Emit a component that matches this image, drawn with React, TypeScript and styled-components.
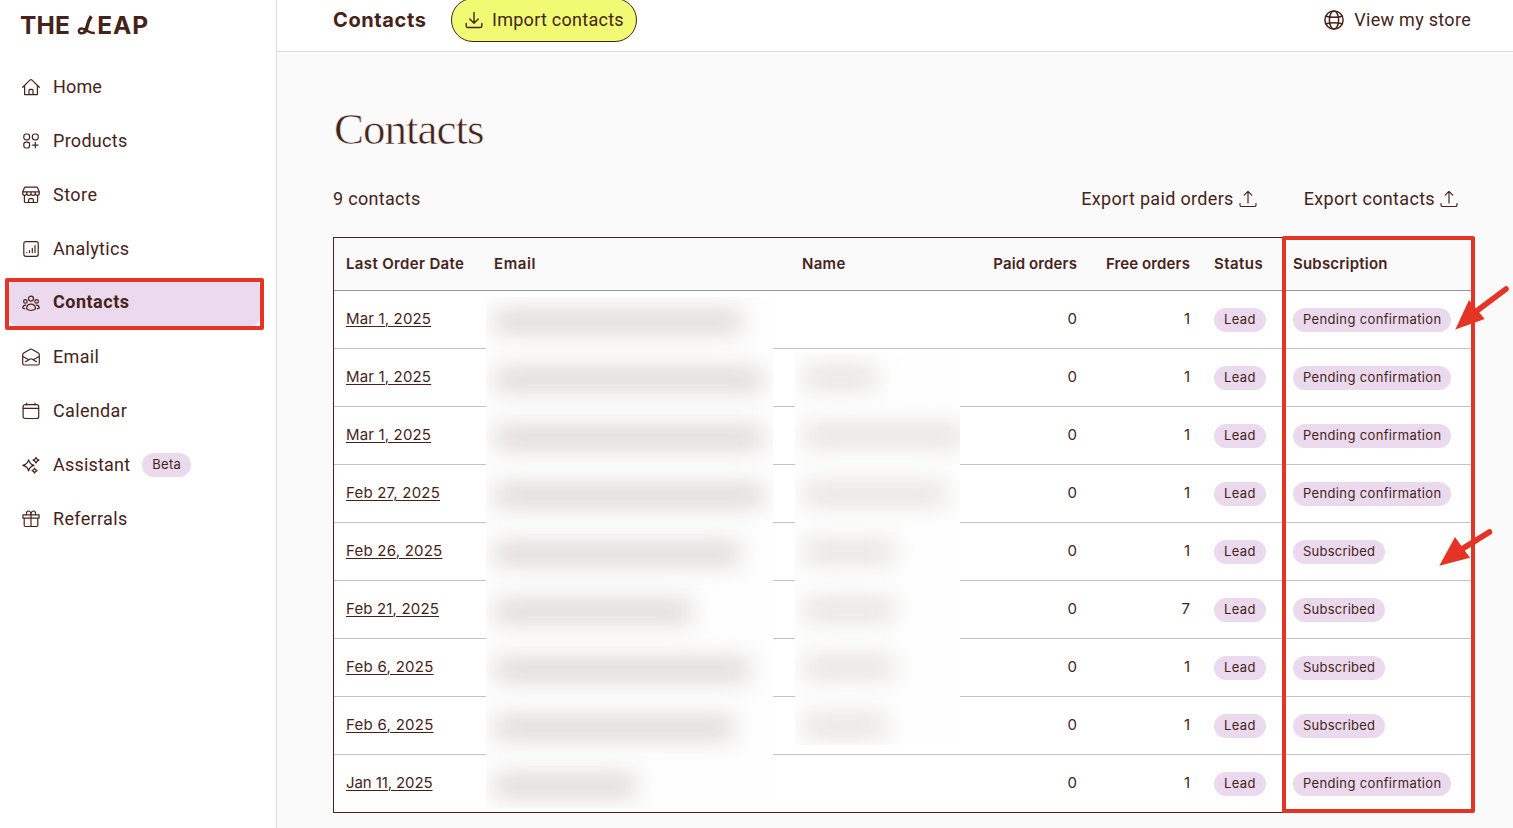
import React from "react";
import styled, { createGlobalStyle } from "styled-components";

const brown = "#46231a";
const lilac = "#ebdaed";
const red = "#e43425";

const GlobalStyle = createGlobalStyle`
  * { box-sizing: border-box; }
  body { margin: 0; background: #fafafa; color: ${brown}; overflow: hidden; }
`;

const Page = styled.div`
  position: relative;
  display: flex;
  width: 100%;
  height: 828px;
  overflow: hidden;
  font-family: Roboto, "Liberation Sans", sans-serif;
  font-size: 18px;
`;

const Sidebar = styled.aside`
  width: 277px;
  flex: none;
  background: #fff;
  border-right: 1px solid #d9d9d9;
`;

const Logo = styled.div`
  display: flex;
  align-items: center;
  height: 50px;
  padding-left: 20px;
  font-family: Inter, sans-serif;
  font-weight: 750;
  font-size: 24.5px;
  line-height: 24px;
`;
const LogoWord = styled.span<{ $ls?: number }>`
  letter-spacing: ${(p) => p.$ls ?? 0}px;
`;
const LogoL = styled.svg`
  width: 19px;
  height: 20px;
  margin: 0 1px 0 7px;
`;

const Nav = styled.nav`
  display: flex;
  flex-direction: column;
  gap: 8px;
  padding: 14px 16px 0 9px;
`;

const NavItem = styled.a<{ $active?: boolean }>`
  display: flex;
  align-items: center;
  height: 46px;
  padding-left: 13px;
  gap: 13px;
  border-radius: 8px;
  background: ${(p) => (p.$active ? lilac : "transparent")};
  font-weight: ${(p) => (p.$active ? 700 : 400)};
`;

const Label = styled.span<{ $ls?: number; $up?: number }>`
  letter-spacing: ${(p) => p.$ls ?? 0}px;
  padding-bottom: ${(p) => p.$up ?? 0}px;
  white-space: nowrap;
`;

const Icon = styled.svg<{ $size?: number; $sw?: number }>`
  width: ${(p) => p.$size ?? 18}px;
  height: ${(p) => p.$size ?? 18}px;
  flex: none;
  fill: none;
  stroke: ${brown};
  stroke-width: ${(p) => p.$sw ?? 1.2};
  stroke-linecap: round;
  stroke-linejoin: round;
`;

const Pill = styled.span<{ $ls?: number }>`
  display: inline-flex;
  align-items: center;
  height: 24px;
  padding: 0 10px 2px;
  border-radius: 12px;
  background: ${lilac};
  font-family: Inter, sans-serif;
  font-size: 13px;
  font-weight: 400;
  letter-spacing: ${(p) => p.$ls ?? 0.35}px;
  white-space: nowrap;
`;
const NavBadge = styled(Pill)`
  margin-left: -1px;
`;

const Main = styled.main`
  flex: 1;
  min-width: 0;
`;

const TopBar = styled.header`
  display: flex;
  align-items: center;
  height: 52px;
  padding: 0 42px 12px 56px;
  background: #fff;
  border-bottom: 1px solid #d9d9d9;
`;
const TopTitle = styled.span`
  width: 118px;
  font-family: Inter, sans-serif;
  font-size: 20px;
  font-weight: 700;
  letter-spacing: 0.6px;
`;
const ImportButton = styled.button`
  display: flex;
  align-items: center;
  flex: none;
  gap: 9px;
  width: 186px;
  height: 44px;
  padding: 0 0 0 13px;
  border: 1px solid ${brown};
  border-radius: 22px;
  background: #f0fb73;
  color: ${brown};
  font: inherit;
`;
const StoreLink = styled.a`
  display: flex;
  align-items: center;
  gap: 10px;
  margin-left: auto;
`;

const Content = styled.section`
  padding: 53px 41px 0 56px;
`;
const Heading = styled.h1`
  margin: 0 0 0 1px;
  height: 48px;
  font-family: "Liberation Serif", serif;
  font-size: 45px;
  font-weight: 400;
  line-height: 48px;
  letter-spacing: -1px;
  -webkit-text-stroke: 0.6px #fafafa;
`;
const Summary = styled.div`
  display: flex;
  align-items: center;
  height: 30px;
  margin: 31px 14px 23px 0;
`;
const ExportLink = styled.a<{ $first?: boolean }>`
  display: flex;
  align-items: center;
  gap: 5px;
  margin-left: ${(p) => (p.$first ? "auto" : "47px")};
`;

const Table = styled.div`
  border: 1px solid ${brown};
  font-family: Inter, sans-serif;
  font-size: 15px;
`;
const Row = styled.div<{ $head?: boolean }>`
  display: grid;
  grid-template-columns: 148px 308px 180px 119px 113px 79px 1fr;
  align-items: center;
  height: ${(p) => (p.$head ? 53 : 58)}px;
  background: ${(p) => (p.$head ? "#fafafa" : "#fff")};
  border-bottom: 1px solid ${(p) => (p.$head ? "#999" : "#c4c4c4")};
  font-weight: ${(p) => (p.$head ? 600 : 400)};
  &:last-child { border-bottom: 0; height: 57px; }
`;
const Cell = styled.div<{ $right?: boolean; $pill?: boolean; $ls?: number }>`
  padding: ${(p) => (p.$pill ? "1px 12px 0" : "0 12px 2px")};
  text-align: ${(p) => (p.$right ? "right" : "left")};
  letter-spacing: ${(p) => p.$ls ?? 0}px;
  white-space: nowrap;
`;
const DateLink = styled.a<{ $ls?: number }>`
  text-decoration: underline;
  text-decoration-thickness: 1px;
  text-underline-offset: 2px;
  letter-spacing: ${(p) => p.$ls ?? 0}px;
`;

const Redaction = styled.div<{ $x: number; $y: number; $w: number; $h: number }>`
  position: absolute;
  left: ${(p) => p.$x}px;
  top: ${(p) => p.$y}px;
  width: ${(p) => p.$w}px;
  height: ${(p) => p.$h}px;
  padding: 15px 0 0 9px;
  display: flex;
  flex-direction: column;
  gap: 39px;
  overflow: hidden;
  background: #fefefe;
`;
const Smudge = styled.div<{ $w: number; $tone: string }>`
  flex: none;
  width: ${(p) => p.$w}px;
  height: 19px;
  background: ${(p) => p.$tone};
  filter: blur(12px);
`;

const Frame = styled.div<{ $x: number; $y: number; $w: number; $h: number }>`
  position: absolute;
  left: ${(p) => p.$x}px;
  top: ${(p) => p.$y}px;
  width: ${(p) => p.$w}px;
  height: ${(p) => p.$h}px;
  border: 4px solid ${red};
  border-radius: 2px;
`;
const Arrow = styled.svg<{ $x: number; $y: number }>`
  position: absolute;
  left: ${(p) => p.$x}px;
  top: ${(p) => p.$y}px;
  width: 60px;
  height: 50px;
`;

const paths: Record<string, React.ReactNode> = {
  Home: <path d="M.7 9.3 8.2 1.9q.8-.7 1.6 0l7.5 7.4M2.6 7.6v9h12.8v-9M7 16.6v-4.2q0-1 1-1h2q1 0 1 1v4.2" />,
  Products: (
    <>
      <rect x="1.8" y="2" width="5.8" height="5.8" rx="2.2" />
      <rect x="10.4" y="2" width="5.8" height="5.8" rx="2.2" />
      <rect x="1.8" y="10.2" width="5.8" height="5.8" rx="2.2" />
      <path d="M13.3 10.4v5.4M10.6 13.1H16" />
    </>
  ),
  Store: (
    <path d="M3.6 1.2h10.8q.9 0 1.3.8l1.6 3.8H.7L2.3 2q.4-.8 1.3-.8zM.7 5.8v1.4a2 2 0 0 0 4.1 0V5.8M4.8 7.2a2 2 0 0 0 4.2 0V5.8M9 7.2a2 2 0 0 0 4.2 0V5.8M13.2 7.2a2 2 0 0 0 4.1 0V5.8M2.4 9.4v5.8q0 1.3 1.3 1.3h10.6q1.3 0 1.3-1.3V9.4M6.6 16.5V14q0-1.4 1.4-1.4h2q1.4 0 1.4 1.4v2.5" />
  ),
  Analytics: (
    <>
      <rect x="1.8" y="1.7" width="14.4" height="14.6" rx="2" />
      <path d="M4.8 12.4v.2M7.5 10.6v2M10.3 8.4v4.2M13 5.6v7" />
    </>
  ),
  Contacts: (
    <>
      <circle cx="9" cy="4.6" r="2.5" />
      <circle cx="3.4" cy="7.4" r="1.8" />
      <circle cx="14.6" cy="7.4" r="1.8" />
      <path d="M4.4 14.8q.6-4.6 4.6-4.6t4.6 4.6Q11.4 16.5 9 16.5T4.4 14.8zM3.8 11.2Q1.3 11 .7 13.9q.8.6 1.9.7M14.2 11.2q2.5-.2 3.1 2.7-.8.6-1.9.7" />
    </>
  ),
  Email: (
    <path d="M.7 6.8Q.7 5.6 1.7 5L8.2 1.3q.8-.5 1.6 0L16.3 5q1 .6 1 1.8v8.4q0 1.8-1.8 1.8h-13Q.7 17 .7 15.200zM.9 8.4l5.8 3.3M17.1 8.4l-5.8 3.3M3.5 13.8 8.2 11q.8-.5 1.6 0l4.7 2.8" />
  ),
  Calendar: (
    <>
      <rect x="1.1" y="2.7" width="15.6" height="13.8" rx="2" />
      <path d="M1.1 6.3h15.6M4.8 1.2v1.5M13 1.2v1.5" />
    </>
  ),
  Assistant: (
    <path d="M6.6 3.9Q7.6 8.3 12 9.4 7.6 10.5 6.6 14.8 5.6 10.5.8 9.4 5.6 8.3 6.6 3.9zM14 1.3q.6 2.1 2.9 2.8-2.3.7-2.9 2.9-.6-2.2-2.9-2.9 2.3-.7 2.9-2.8zM12.6 12.2q.5 1.8 2.5 2.4-2 .6-2.5 2.5-.5-1.9-2.5-2.5 2-.6 2.5-2.4z" />
  ),
  Referrals: (
    <path d="M.9 4.8h16.2v3.3H.9zM2.2 8.1v7.2q0 1.2 1.2 1.2h11.2q1.2 0 1.2-1.2V8.1M9 4.8v11.7M9 4.8Q8.7 1 6.4 1T4.5 4.8M9 4.8Q9.3 1 11.6 1t1.9 3.8" />
  ),
};

const nav: { name: string; ls: number; badge?: string }[] = [
  { name: "Home", ls: 0.15 },
  { name: "Products", ls: 0.28 },
  { name: "Store", ls: 0.45 },
  { name: "Analytics", ls: 0.35 },
  { name: "Contacts", ls: 0.5 },
  { name: "Email", ls: 0.35 },
  { name: "Calendar", ls: 0.35 },
  { name: "Assistant", ls: 0.2, badge: "Beta" },
  { name: "Referrals", ls: 0.33 },
];

const columns: { title: string; ls: number; right?: boolean }[] = [
  { title: "Last Order Date", ls: 0.35 },
  { title: "Email", ls: 0.6 },
  { title: "Name", ls: 0.3 },
  { title: "Paid orders", ls: 0.12, right: true },
  { title: "Free orders", ls: 0.12, right: true },
  { title: "Status", ls: 0.45 },
  { title: "Subscription", ls: 0.2 },
];

const rows: { date: string; ls: number; free: string; sub: string }[] = [
  { date: "Mar 1, 2025", ls: 0.16, free: "1", sub: "Pending confirmation" },
  { date: "Mar 1, 2025", ls: 0.16, free: "1", sub: "Pending confirmation" },
  { date: "Mar 1, 2025", ls: 0.16, free: "1", sub: "Pending confirmation" },
  { date: "Feb 27, 2025", ls: 0.2, free: "1", sub: "Pending confirmation" },
  { date: "Feb 26, 2025", ls: 0.22, free: "1", sub: "Subscribed" },
  { date: "Feb 21, 2025", ls: 0.16, free: "7", sub: "Subscribed" },
  { date: "Feb 6, 2025", ls: 0.27, free: "1", sub: "Subscribed" },
  { date: "Feb 6, 2025", ls: 0.27, free: "1", sub: "Subscribed" },
  { date: "Jan 11, 2025", ls: -0.1, free: "1", sub: "Pending confirmation" },
];

const emailWidths = [246, 267, 268, 268, 244, 196, 254, 238, 140];
const nameWidths = [72, 160, 142, 90, 90, 90, 82];

export default function App() {
  return (
    <>
      <GlobalStyle />
      <Page>
        <Sidebar>
          <Logo>
            <LogoWord $ls={0.2}>THE</LogoWord>
            <LogoL viewBox="0 0 19 20" fill="none" stroke={brown}>
              <path d="M14.3 1.2Q11.3 5.700 10.300 10.700 9.300 15.700 7 17.500" strokeWidth="3.4" />
              <path d="M8.500 16.2Q6.500 18.800 3.800 18.200 1.400 17.400 2 15.200 3 12.900 6.500 13.900 9 15 11.500 16.500 14 18.100 17.800 17.900" strokeWidth="2.5" />
            </LogoL>
            <LogoWord $ls={1}>EAP</LogoWord>
          </Logo>
          <Nav>
            {nav.map((n) => (
              <NavItem key={n.name} $active={n.name === "Contacts"}>
                <Icon viewBox="0 0 18 18">{paths[n.name]}</Icon>
                <Label $ls={n.ls} $up={n.name === "Contacts" ? 4 : 2}>{n.name}</Label>
                {n.badge && <NavBadge $ls={0.3}>{n.badge}</NavBadge>}
              </NavItem>
            ))}
          </Nav>
        </Sidebar>
        <Main>
          <TopBar>
            <TopTitle>Contacts</TopTitle>
            <ImportButton>
              <Icon $size={18} $sw={1.4} viewBox="0 0 18 18">
                <path d="M9 1.5v10.5M4.8 8l4.2 4.2L13.2 8M1.2 12.5v2.4q0 1.6 1.6 1.6h12.4q1.6 0 1.6-1.6v-2.4" />
              </Icon>
              <Label $ls={0.27}>Import contacts</Label>
            </ImportButton>
            <StoreLink>
              <Icon $size={20} $sw={1.5} viewBox="0 0 20 20">
                <circle cx="10" cy="10" r="9.1" />
                <ellipse cx="10" cy="10" rx="4.6" ry="9.1" />
                <path d="M1.8 6.2q8.2 2.3 16.4 0M1.8 13.8q8.2-2.3 16.4 0" />
              </Icon>
              <Label $ls={0.3}>View my store</Label>
            </StoreLink>
          </TopBar>
          <Content>
            <Heading>Contacts</Heading>
            <Summary>
              <Label $ls={0.3} $up={2}>9 contacts</Label>
              {["Export paid orders", "Export contacts"].map((t, i) => (
                <ExportLink key={t} $first={i === 0}>
                  <Label $ls={0.33} $up={2}>{t}</Label>
                  <Icon viewBox="0 0 18 18">
                    <path d="M9 13V1.5M5.2 5.2 9 1.4l3.8 3.8M1 13.5v1.4q0 1.6 1.6 1.6h12.8q1.6 0 1.6-1.6v-1.4" />
                  </Icon>
                </ExportLink>
              ))}
            </Summary>
            <Table role="table">
              <Row $head>
                {columns.map((c) => (
                  <Cell role="columnheader" key={c.title} $right={c.right} $ls={c.ls}>{c.title}</Cell>
                ))}
              </Row>
              {rows.map((r, i) => (
                <Row key={i}>
                  <Cell><DateLink $ls={r.ls}>{r.date}</DateLink></Cell>
                  <Cell />
                  <Cell />
                  <Cell $right>0</Cell>
                  <Cell $right>{r.free}</Cell>
                  <Cell $pill><Pill>Lead</Pill></Cell>
                  <Cell $pill><Pill $ls={r.sub === "Subscribed" ? 0.22 : 0.35}>{r.sub}</Pill></Cell>
                </Row>
              ))}
            </Table>
          </Content>
        </Main>
        <Redaction $x={486} $y={297} $w={287} $h={511}>
          {emailWidths.map((w, i) => (
            <Smudge key={i} $w={w} $tone="#d7d0ce" />
          ))}
        </Redaction>
        <Redaction $x={795} $y={353} $w={165} $h={392}>
          {nameWidths.map((w, i) => (
            <Smudge key={i} $w={w} $tone="#e1dddb" />
          ))}
        </Redaction>
        <Frame $x={5} $y={278} $w={259} $h={52} />
        <Frame $x={1282} $y={236} $w={193} $h={577} />
        <Arrow $x={1453} $y={284} viewBox="0 0 60 50">
          <path d="M53 5 25 26" stroke={red} strokeWidth="5.6" strokeLinecap="round" />
          <path d="M2.3 45.5 16 16l15.7 19z" fill={red} />
        </Arrow>
        <Arrow $x={1437} $y={527} viewBox="0 0 60 50">
          <path d="M52.5 5 25 22" stroke={red} strokeWidth="5.6" strokeLinecap="round" />
          <path d="M2.3 38.8 18 10l15 20.7z" fill={red} />
        </Arrow>
      </Page>
    </>
  );
}
